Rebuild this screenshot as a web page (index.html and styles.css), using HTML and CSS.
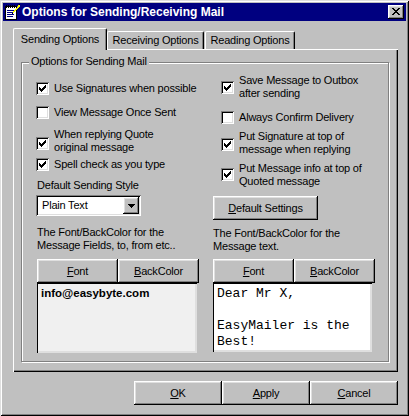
FILE: index.html
```html
<!DOCTYPE html>
<html>
<head>
<meta charset="utf-8">
<title>Options for Sending/Receiving Mail</title>
<link rel="stylesheet" href="styles.css">
</head>
<body>
<div class="window">
  <div class="titlebar">
    <svg class="appicon" width="16" height="16" viewBox="0 0 16 16" shape-rendering="crispEdges">
      <rect x="1" y="2" width="11" height="13" fill="#fff" stroke="#000" stroke-width="1" transform="translate(0.5 0.5)"/>
      <path d="M3 6h7v1H3zM3 8h7v1H3zM3 10h7v1H3zM3 12h6v1H3z" fill="#000080"/>
      <path d="M2 1h1v3H2zM4 1h1v3H4zM6 1h1v3H6zM8 1h1v3H8zM10 1h1v3H10z" fill="#000"/>
      <path d="M14 1h2v2h-1v1h-1v1h-1v1h-1v1h-1v1h-1v1H9V7h1V6h1V5h1V4h1V3h1z" fill="#ffff00"/>
      <path d="M15 0h1v1h-1zM8 9h1v1H8z" fill="#000"/>
      <path d="M13 2h1v1h-1z" fill="#808080"/>
    </svg>
    <span class="title">Options for Sending/Receiving Mail</span>
    <span class="closebtn raised">
      <svg width="8" height="7" viewBox="0 0 8 7" shape-rendering="crispEdges"><path d="M0 0h2v1H0zM6 0h2v1H6zM1 1h2v1H1zM5 1h2v1H5zM2 2h4v1H2zM3 3h2v1H3zM2 4h4v1H2zM1 5h2v1H1zM5 5h2v1H5zM0 6h2v1H0zM6 6h2v1H6z" fill="#000"/></svg>
    </span>
  </div>

  <div class="tabstrip">
    <div class="tab active">Sending Options</div>
    <div class="tab tab2">Receiving Options</div>
    <div class="tab tab3">Reading Options</div>
  </div>

  <div class="panel">
    <div class="group">
      <span class="legend">Options for Sending Mail</span>

      <div class="col col-left">
        <div class="check l1"><span class="box"><svg class="tick" width="13" height="13" viewBox="0 0 13 13" shape-rendering="crispEdges"><path d="M3 5h1v3H3zM4 6h1v3H4zM5 7h1v3H5zM6 6h1v3H6zM7 5h1v3H7zM8 4h1v3H8zM9 3h1v3H9z"/></svg></span><span class="lbl">Use Signatures when possible</span></div>
        <div class="check l2"><span class="box"></span><span class="lbl">View Message Once Sent</span></div>
        <div class="check two l3"><span class="box"><svg class="tick" width="13" height="13" viewBox="0 0 13 13" shape-rendering="crispEdges"><path d="M3 5h1v3H3zM4 6h1v3H4zM5 7h1v3H5zM6 6h1v3H6zM7 5h1v3H7zM8 4h1v3H8zM9 3h1v3H9z"/></svg></span><span class="lbl">When replying Quote<br>original message</span></div>
        <div class="check l4"><span class="box"><svg class="tick" width="13" height="13" viewBox="0 0 13 13" shape-rendering="crispEdges"><path d="M3 5h1v3H3zM4 6h1v3H4zM5 7h1v3H5zM6 6h1v3H6zM7 5h1v3H7zM8 4h1v3H8zM9 3h1v3H9z"/></svg></span><span class="lbl">Spell check as you type</span></div>

        <div class="label style-label">Default Sending Style</div>
        <div class="combo">
          <span class="combo-text">Plain Text</span>
          <span class="combo-btn raised"><svg width="7" height="4" viewBox="0 0 7 4" shape-rendering="crispEdges"><path d="M0 0h7v1H0zM1 1h5v1H1zM2 2h3v1H2zM3 3h1v1H3z" fill="#000"/></svg></span>
        </div>

        <div class="label two-line fields-label">The Font/BackColor for the<br>Message Fields, to, from etc..</div>
        <div class="fbtns">
          <span class="btn raised fbtn"><u>F</u>ont</span>
          <span class="btn raised fbtn"><u>B</u>ackColor</span>
        </div>
        <div class="tbox tbox-fields">info@easybyte.com</div>
      </div>

      <div class="col col-right">
        <div class="check two r1"><span class="box"><svg class="tick" width="13" height="13" viewBox="0 0 13 13" shape-rendering="crispEdges"><path d="M3 5h1v3H3zM4 6h1v3H4zM5 7h1v3H5zM6 6h1v3H6zM7 5h1v3H7zM8 4h1v3H8zM9 3h1v3H9z"/></svg></span><span class="lbl">Save Message to Outbox<br>after sending</span></div>
        <div class="check r2"><span class="box"></span><span class="lbl">Always Confirm Delivery</span></div>
        <div class="check two r3"><span class="box"><svg class="tick" width="13" height="13" viewBox="0 0 13 13" shape-rendering="crispEdges"><path d="M3 5h1v3H3zM4 6h1v3H4zM5 7h1v3H5zM6 6h1v3H6zM7 5h1v3H7zM8 4h1v3H8zM9 3h1v3H9z"/></svg></span><span class="lbl">Put Signature at top of<br>message when replying</span></div>
        <div class="check two r4"><span class="box"><svg class="tick" width="13" height="13" viewBox="0 0 13 13" shape-rendering="crispEdges"><path d="M3 5h1v3H3zM4 6h1v3H4zM5 7h1v3H5zM6 6h1v3H6zM7 5h1v3H7zM8 4h1v3H8zM9 3h1v3H9z"/></svg></span><span class="lbl">Put Message info at top of<br>Quoted message</span></div>

        <span class="btn raised defbtn"><u>D</u>efault Settings</span>

        <div class="label two-line text-label">The Font/BackColor for the<br>Message text.</div>
        <div class="fbtns right-fbtns">
          <span class="btn raised fbtn"><u>F</u>ont</span>
          <span class="btn raised fbtn"><u>B</u>ackColor</span>
        </div>
        <div class="tbox tbox-text">Dear Mr X,<br><br>EasyMailer is the<br>Best!</div>
      </div>
    </div>
  </div>

  <div class="footer">
    <span class="btn raised dlgbtn"><u>O</u>K</span>
    <span class="btn raised dlgbtn"><u>A</u>pply</span>
    <span class="btn raised dlgbtn"><u>C</u>ancel</span>
  </div>
</div>
</body>
</html>
```

FILE: styles.css
```css
* { box-sizing: border-box; margin: 0; padding: 0; }
html, body { width: 409px; height: 416px; overflow: hidden; }
body {
  background: #c0c0c0;
  font-family: "Liberation Sans", Arial, sans-serif;
  font-size: 11px;
  letter-spacing: -0.2px;
  line-height: 13px;
  color: #000;
}
u { text-decoration: underline; text-underline-offset: 1px; }

.window {
  width: 409px;
  height: 416px;
  padding: 3px;
  background: #c0c0c0;
  box-shadow: inset 1px 1px 0 #dfdfdf, inset -1px -1px 0 #000, inset 2px 2px 0 #fff, inset -2px -2px 0 #808080;
  display: flex;
  flex-direction: column;
}

.raised {
  background: #c0c0c0;
  box-shadow: inset -1px -1px 0 #000, inset 1px 1px 0 #fff, inset -2px -2px 0 #808080, inset 2px 2px 0 #dfdfdf;
}

/* title bar */
.titlebar {
  height: 18px;
  flex: none;
  background: #000080;
  color: #fff;
  display: flex;
  align-items: center;
  padding: 0 2px 0 1px;
}
.appicon { flex: none; display: block; }
.title {
  flex: 1;
  margin-left: 2px;
  font-weight: bold;
  font-size: 12px;
  letter-spacing: 0;
  white-space: nowrap;
}
.closebtn {
  width: 16px;
  height: 14px;
  display: flex;
  align-items: center;
  justify-content: center;
  padding-left: 0;
}
.closebtn svg { display: block; margin-top: -1px; }

/* tabs */
.tabstrip {
  position: relative;
  z-index: 2;
  margin: 7px 0 0 10px;
  height: 21px;
  display: flex;
  align-items: flex-end;
}
.tab {
  height: 18px;
  background: #c0c0c0;
  border-left: 1px solid #fff;
  border-top: 1px solid #fff;
  border-right: 1px solid #000;
  box-shadow: inset -1px 0 0 #808080;
  border-top-left-radius: 2px;
  border-top-right-radius: 2px;
  text-align: center;
  white-space: nowrap;
  padding-top: 2px;
}
.tab.active {
  width: 94px;
  height: 22px;
  margin-bottom: -1px;
  padding-top: 4px;
}
.tab2 { width: 97px; }
.tab3 { width: 90px; margin-left: 1px; }

/* panel */
.panel {
  position: relative;
  z-index: 1;
  width: 385px;
  height: 323px;
  margin-left: 10px;
  flex: none;
  padding: 13px 0 0 8px;
  box-shadow: inset 1px 1px 0 #fff, inset -1px -1px 0 #000, inset -2px -2px 0 #808080;
}

.group {
  position: relative;
  width: 368px;
  height: 300px;
  border: 1px solid #808080;
  box-shadow: inset 1px 1px 0 #fff, 1px 1px 0 #fff;
  display: flex;
  padding-left: 14px;
}
.legend {
  position: absolute;
  top: -8px;
  left: 7px;
  padding: 0 2px;
  background: #c0c0c0;
  white-space: nowrap;
}

.col { display: flex; flex-direction: column; }
.col-left { width: 177px; }
.col-right { flex: 1; }

/* checkboxes */
.check {
  display: flex;
  align-items: flex-start;
  height: 13px;
  white-space: nowrap;
}
.check.two { height: 26px; }
.box {
  width: 13px;
  height: 13px;
  flex: none;
  background: #fff;
  box-shadow: inset 1px 1px 0 #808080, inset -1px -1px 0 #fff, inset 2px 2px 0 #000, inset -2px -2px 0 #dfdfdf;
  position: relative;
}
.tick { display: block; fill: #000; }
.lbl { margin-left: 5px; line-height: 13px; }
.col-right .lbl { margin-left: 5px; }

.l1 { margin-top: 19px; }
.l2 { margin-top: 11px; }
.l3 { margin-top: 9px; }
.l3 .box { margin-top: 9px; }
.l4 { margin-top: 4px; }

.r1 { margin-top: 11px; }
.r1 .box { margin-top: 7px; }
.r2 { margin-top: 11px; }
.r3 { margin-top: 6px; }
.r3 .box { margin-top: 8px; }
.r4 { margin-top: 6px; }
.r4 .box { margin-top: 6px; }
.col-right .check { margin-left: 8px; }

.label { white-space: nowrap; line-height: 13px; height: 13px; }
.label.two-line { height: 26px; }
.style-label { margin-top: 8px; margin-left: 1px; }

/* combo */
.combo {
  margin-top: 3px;
  width: 105px;
  height: 21px;
  background: #fff;
  box-shadow: inset 1px 1px 0 #808080, inset -1px -1px 0 #fff, inset 2px 2px 0 #000, inset -2px -2px 0 #dfdfdf;
  display: flex;
  align-items: center;
  padding: 2px;
}
.combo-text { flex: 1; padding-left: 4px; }
.combo-btn {
  width: 16px;
  height: 17px;
  display: flex;
  align-items: center;
  justify-content: center;
}
.combo-btn svg { display: block; }

.fields-label { margin-top: 10px; margin-left: 1px; }
.text-label { margin-top: 7px; }

/* buttons */
.btn {
  display: flex;
  align-items: center;
  justify-content: center;
  height: 24px;
  white-space: nowrap;
}
.fbtns { display: flex; margin-top: 7px; margin-left: 1px; }
.right-fbtns { margin-top: 6px; margin-left: 0; }
.fbtn { width: 81px; }

.defbtn { width: 105px; margin-top: 8px; }

/* text boxes */
.tbox {
  height: 70px;
  box-shadow: inset 1px 1px 0 #000, inset -1px -1px 0 #dfdfdf, inset -2px -2px 0 #dfdfdf;
}
.tbox-fields {
  width: 160px;
  margin-left: 1px;
  background: #f0f0f0;
  font-weight: bold;
  font-size: 11.5px;
  letter-spacing: 0;
  padding: 4px 4px 0 4px;
}
.tbox-text {
  width: 159px;
  height: 69px;
  background: #fff;
  font-family: "Liberation Mono", "Courier New", monospace;
  font-size: 13px;
  letter-spacing: 0;
  line-height: 16px;
  padding: 3px 4px 0 4px;
}

/* footer */
.footer {
  display: flex;
  justify-content: flex-end;
  margin-top: 9px;
  padding-right: 8px;
}
.dlgbtn { width: 88px; }
```
